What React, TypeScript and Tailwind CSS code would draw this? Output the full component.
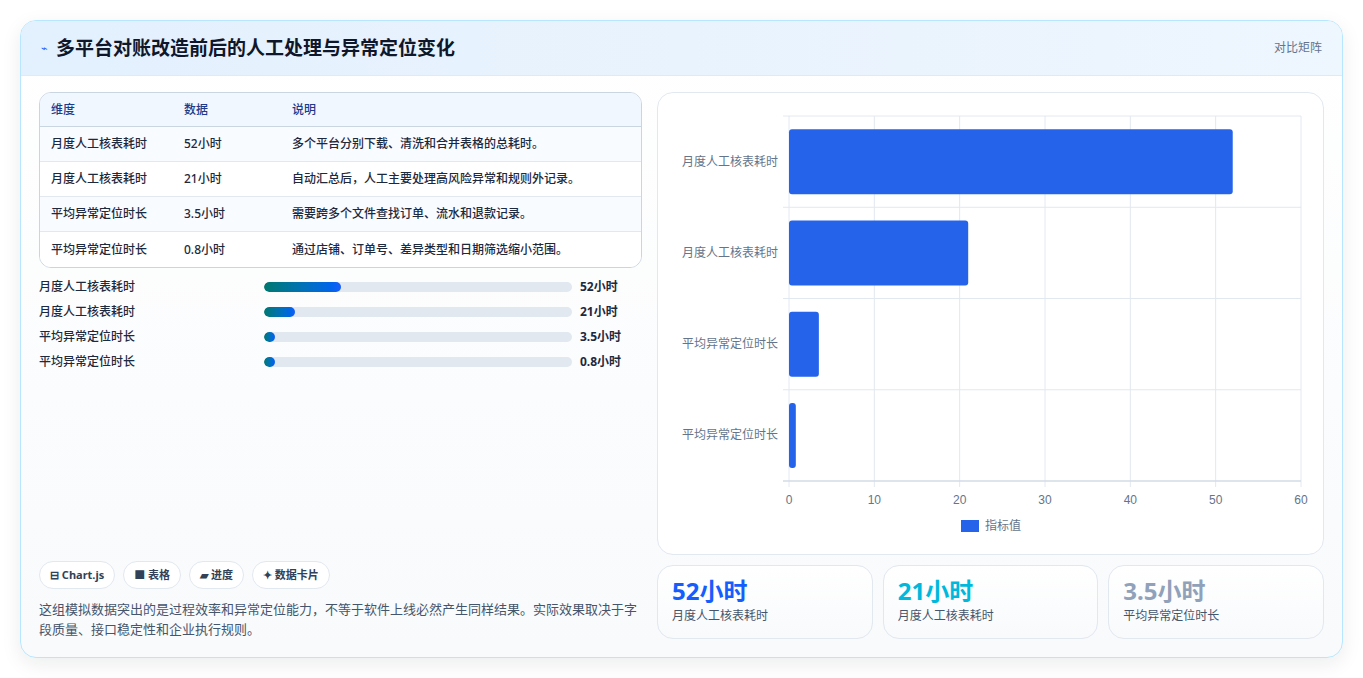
import React from 'react'

const rows = [
  { name: '月度人工核表耗时', value: 52, text: '52小时', note: '多个平台分别下载、清洗和合并表格的总耗时。' },
  { name: '月度人工核表耗时', value: 21, text: '21小时', note: '自动汇总后，人工主要处理高风险异常和规则外记录。' },
  { name: '平均异常定位时长', value: 3.5, text: '3.5小时', note: '需要跨多个文件查找订单、流水和退款记录。' },
  { name: '平均异常定位时长', value: 0.8, text: '0.8小时', note: '通过店铺、订单号、差异类型和日期筛选缩小范围。' },
]

const font = { fontFamily: '"Noto Sans", "Noto Sans CJK SC", sans-serif' }

function Chart() {
  // plot area in svg coords: x 131..643, y 23..388 (panel origin 657,92)
  const x0 = 131
  const x1 = 643
  const y0 = 23
  const y1 = 388
  const sx = (v: number) => x0 + ((x1 - x0) * v) / 60
  const band = (y1 - y0) / 4
  return (
    <svg width="666" height="462" viewBox="0 0 666 462" className="block">
      {[0, 10, 20, 30, 40, 50, 60].map((t) => (
        <g key={t}>
          <line x1={sx(t)} x2={sx(t)} y1={y0} y2={y1 + 6} stroke="#e2e8f0" />
          <text x={sx(t)} y={411} textAnchor="middle" fontSize="12" fill="#64748b" fontFamily="Liberation Sans, sans-serif">{t}</text>
        </g>
      ))}
      {[0, 1, 2, 3, 4].map((i) => (
        <line key={i} x1={x0 - 6} x2={x1} y1={y0 + band * i} y2={y0 + band * i} stroke="#e2e8f0" />
      ))}
      <line x1={x0 - 6} x2={x1} y1={y1} y2={y1} stroke="#cbd5e1" />
      {rows.map((r, i) => {
        const cy = y0 + band * i + band / 2
        return (
          <g key={i}>
            <rect x={x0} y={cy - 32.5} width={sx(r.value) - x0} height={65} rx={3} fill="#2563eb" />
            <text x={x0 - 11} y={cy + 4} textAnchor="end" fontSize="12" fill="#64748b" style={font}>{r.name}</text>
          </g>
        )
      })}
      <rect x={303} y={427} width={18} height={12} fill="#2563eb" />
      <text x={327} y={437} fontSize="12" fill="#64748b" style={font}>指标值</text>
    </svg>
  )
}

export default function App() {
  return (
    <div className="min-h-screen bg-white p-5" style={font}>
      <div className="rounded-2xl border border-sky-200 bg-gradient-to-b from-white to-slate-50 shadow-[0_6px_20px_rgba(15,23,42,0.08)] overflow-hidden">
        {/* Header */}
        <div className="h-[55px] flex items-center justify-between px-5 bg-gradient-to-r from-[#e3f0fd] to-[#eef6fe] border-b border-[#dbeafe]">
          <div className="flex items-center gap-2">
            <span className="text-blue-600 text-[11px]">⌁</span>
            <h1 className="text-[19px] font-bold text-slate-900">多平台对账改造前后的人工处理与异常定位变化</h1>
          </div>
          <span className="text-xs text-slate-500">对比矩阵</span>
        </div>

        <div className="flex gap-[15px] px-[18px] pt-4 pb-[18px]">
          {/* Left */}
          <div className="w-[604px] flex flex-col">
            <div className="rounded-xl border border-slate-300 overflow-hidden text-xs">
              <div className="flex h-[34px] items-center bg-[#f1f7fe] border-b border-slate-300 text-[#1e3a8a] font-medium">
                <div className="w-[144px] pl-[11px]">维度</div>
                <div className="w-[108px]">数据</div>
                <div>说明</div>
              </div>
              {rows.map((r, i) => (
                <div key={i} className={`flex h-[35px] items-center text-slate-800 font-medium ${i < 3 ? 'border-b border-slate-200' : ''} ${i % 2 ? 'bg-white' : 'bg-[#f8fbff]'}`}>
                  <div className="w-[144px] pl-[11px]">{r.name}</div>
                  <div className="w-[108px]">{r.text}</div>
                  <div>{r.note}</div>
                </div>
              ))}
            </div>

            <div className="mt-3 flex flex-col gap-[11px]">
              {rows.map((r, i) => (
                <div key={i} className="flex items-center h-[14px] text-xs font-medium text-slate-800">
                  <div className="w-[225px]">{r.name}</div>
                  <div className="w-[308px] h-[10px] rounded-full bg-slate-200 overflow-hidden">
                    <div className="h-full rounded-full bg-gradient-to-r from-teal-700 to-blue-600" style={{ width: `${Math.max((r.value / 208) * 100, 3.5)}%` }} />
                  </div>
                  <div className="ml-2 font-bold">{r.text}</div>
                </div>
              ))}
            </div>

            <div className="mt-auto">
              <div className="flex gap-2 text-[11px] font-bold text-slate-700">
                <span className="rounded-full border border-slate-200 bg-white px-[10px] h-[28px] flex items-center">⊟ Chart.js</span>
                <span className="rounded-full border border-slate-200 bg-white px-[10px] h-[28px] flex items-center">■ 表格</span>
                <span className="rounded-full border border-slate-200 bg-white px-[10px] h-[28px] flex items-center">▰ 进度</span>
                <span className="rounded-full border border-slate-200 bg-white px-[10px] h-[28px] flex items-center">✦ 数据卡片</span>
              </div>
              <p className="mt-[10px] text-[13px] leading-[20px] text-slate-600">这组模拟数据突出的是过程效率和异常定位能力，不等于软件上线必然产生同样结果。实际效果取决于字段质量、接口稳定性和企业执行规则。</p>
            </div>
          </div>

          {/* Right */}
          <div className="w-[667px] flex flex-col gap-[10px]">
            <div className="h-[463px] rounded-2xl border border-slate-200 bg-white overflow-hidden">
              <Chart />
            </div>
            <div className="flex gap-[10px]">
              {[
                { v: '52小时', l: '月度人工核表耗时', c: 'text-blue-600' },
                { v: '21小时', l: '月度人工核表耗时', c: 'text-cyan-500' },
                { v: '3.5小时', l: '平均异常定位时长', c: 'text-slate-400' },
              ].map((s, i) => (
                <div key={i} className="flex-1 h-[74px] rounded-2xl border border-slate-200 bg-gradient-to-b from-white to-slate-50 px-[14px] pt-[9px]">
                  <div className={`text-[24px] font-bold leading-[32px] ${s.c}`}>{s.v}</div>
                  <div className="text-xs text-slate-600 mt-[1px]">{s.l}</div>
                </div>
              ))}
            </div>
          </div>
        </div>
      </div>
    </div>
  )
}
